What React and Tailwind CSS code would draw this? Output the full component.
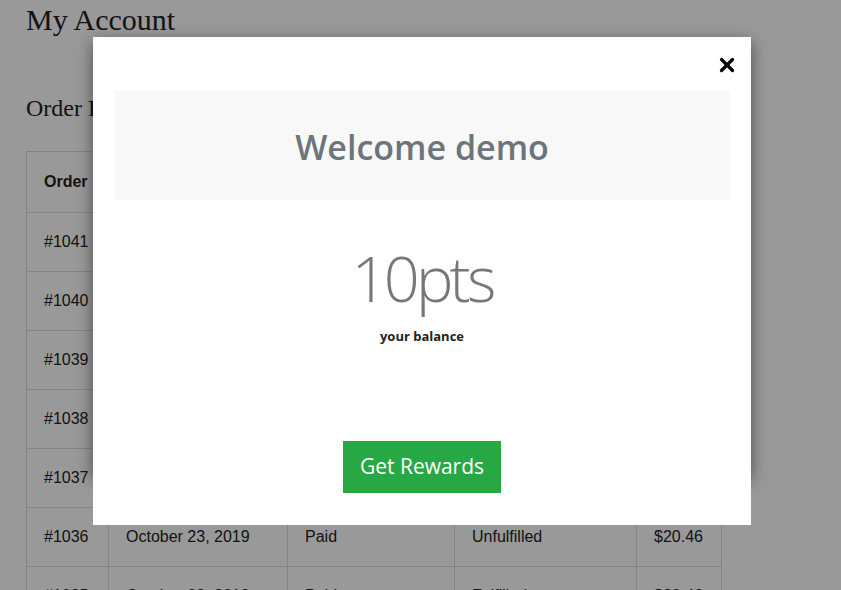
import { X } from "lucide-react";

const orders = [
  { id: "#1041", date: "October 28, 2019", pay: "Paid", ful: "Unfulfilled", total: "$20.46" },
  { id: "#1040", date: "October 28, 2019", pay: "Paid", ful: "Unfulfilled", total: "$20.46" },
  { id: "#1039", date: "October 25, 2019", pay: "Paid", ful: "Unfulfilled", total: "$20.46" },
  { id: "#1038", date: "October 24, 2019", pay: "Paid", ful: "Unfulfilled", total: "$20.46" },
  { id: "#1037", date: "October 24, 2019", pay: "Paid", ful: "Unfulfilled", total: "$20.46" },
  { id: "#1036", date: "October 23, 2019", pay: "Paid", ful: "Unfulfilled", total: "$20.46" },
  { id: "#1035", date: "October 23, 2019", pay: "Paid", ful: "Fulfilled", total: "$20.46" },
];

const cell = "border border-[#dddddd] pl-[17px] pr-3 h-[59px] text-left align-middle";

const App = () => {
  return (
    <div className="relative w-[841px] h-[590px] overflow-hidden bg-white">
      {/* page behind the popup */}
      <div className="px-[26px] text-[#222]">
        <h1 className="font-['Liberation_Serif',serif] text-[30px] leading-[40px] pt-0">
          My Account
        </h1>
        <h2 className="font-['Liberation_Serif',serif] text-[24px] leading-[28px] mt-[54px]">
          Order History
        </h2>
        <table className="mt-[29px] border-collapse font-['Liberation_Sans',Arial,sans-serif] text-[16px]">
          <thead>
            <tr>
              <th className={`${cell} w-[82px] font-bold h-[61px]`}>Order</th>
              <th className={`${cell} w-[179px] font-bold`}>Date</th>
              <th className={`${cell} w-[167px] font-bold`}>Payment Status</th>
              <th className={`${cell} w-[182px] font-bold`}>Fulfillment Status</th>
              <th className={`${cell} w-[85px] font-bold`}>Total</th>
            </tr>
          </thead>
          <tbody>
            {orders.map((o) => (
              <tr key={o.id}>
                <td className={cell}>{o.id}</td>
                <td className={cell}>{o.date}</td>
                <td className={cell}>{o.pay}</td>
                <td className={cell}>{o.ful}</td>
                <td className={cell}>{o.total}</td>
              </tr>
            ))}
          </tbody>
        </table>
      </div>

      {/* backdrop */}
      <div className="absolute inset-0 bg-black/40" />

      {/* popup */}
      <div className="absolute left-[93px] top-[37px] w-[658px] h-[438px] bg-white shadow-[0_5px_15px_rgba(0,0,0,0.5)]">
        <div className="bg-white px-[21px] pt-[54px] pb-[32px] font-['Open_Sans',sans-serif] flex flex-col items-center">
          <button className="absolute right-[13px] top-[17px] text-black">
            <X size={22} strokeWidth={3.5} />
          </button>
          <div className="w-full h-[109px] pt-[4px] bg-[#f8f8f8] flex items-center justify-center">
            <h3 className="text-[34px] font-semibold text-[#6c757d]">Welcome demo</h3>
          </div>
          <div className="mt-[30px] text-[63px] font-light leading-[96px] tracking-[-0.06em] text-[#777]">
            10pts
          </div>
          <div className="mt-[1px] text-[13px] font-bold text-[#222]">your balance</div>
          <button className="mt-[94px] w-[158px] h-[52px] bg-[#28a745] text-white text-[21px]">
            Get Rewards
          </button>
        </div>
      </div>
    </div>
  );
};

export default App;
